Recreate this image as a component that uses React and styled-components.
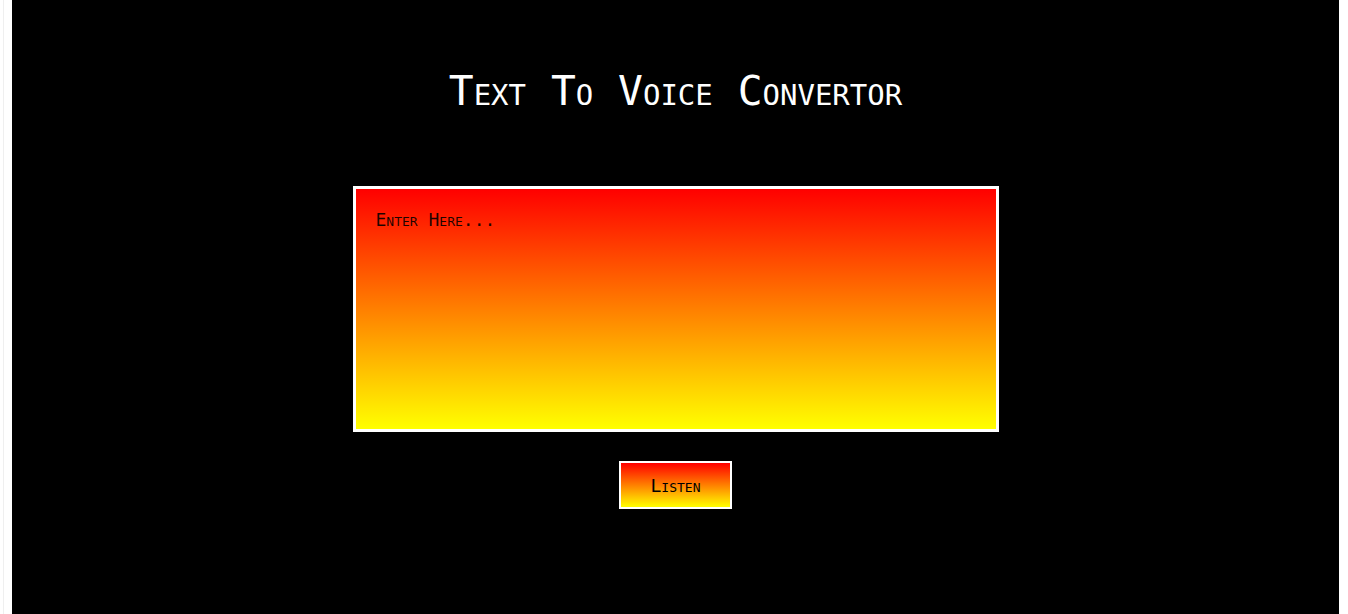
import React from "react";
import styled, { createGlobalStyle } from "styled-components";

const Global = createGlobalStyle`
  html, body { margin: 0; padding: 0; background: #ffffff; }
  body { font-family: "DejaVu Sans Mono", monospace; }
  * { box-sizing: border-box; }
`;

const Frame = styled.div`
  padding: 0 9px 0 3px;
  background: #ffffff;
`;

const Rail = styled.div`
  border-left: 1px solid #efefef;
  padding-left: 8px;
`;

const Stage = styled.main`
  background: #000000;
  min-height: 700px;
  display: flex;
  flex-direction: column;
  align-items: center;
  padding-top: 67px;
`;

const Title = styled.h1`
  margin: 0;
  color: #ffffff;
  font-family: "DejaVu Sans Mono", monospace;
  font-variant: small-caps;
  font-weight: normal;
  font-size: 41.3px;
  line-height: normal;
`;

const Input = styled.textarea`
  margin-top: 71px;
  width: 646px;
  height: 246px;
  padding: 20px;
  border: 3px solid #ffffff;
  background: linear-gradient(#ff0000, #ffff00);
  font-family: "DejaVu Sans Mono", monospace;
  font-variant: small-caps;
  font-size: 18px;
  color: #000000;
  resize: none;
  outline: none;
  &::placeholder {
    color: rgba(0, 0, 0, 0.88);
    font-variant: small-caps;
  }
`;

const Button = styled.button`
  margin-top: 29px;
  width: 113px;
  height: 48px;
  border: 2px solid #ffffff;
  background: linear-gradient(#ff0000, #ffff00);
  font-family: "DejaVu Sans Mono", monospace;
  font-variant: small-caps;
  font-size: 18px;
  color: #000000;
  cursor: pointer;
  padding: 0;
`;

export default function App() {
  return (
    <>
      <Global />
      <Frame>
        <Rail>
          <Stage>
            <Title>Text To Voice Convertor</Title>
            <Input placeholder="Enter Here..." />
            <Button>Listen</Button>
          </Stage>
        </Rail>
      </Frame>
    </>
  );
}
